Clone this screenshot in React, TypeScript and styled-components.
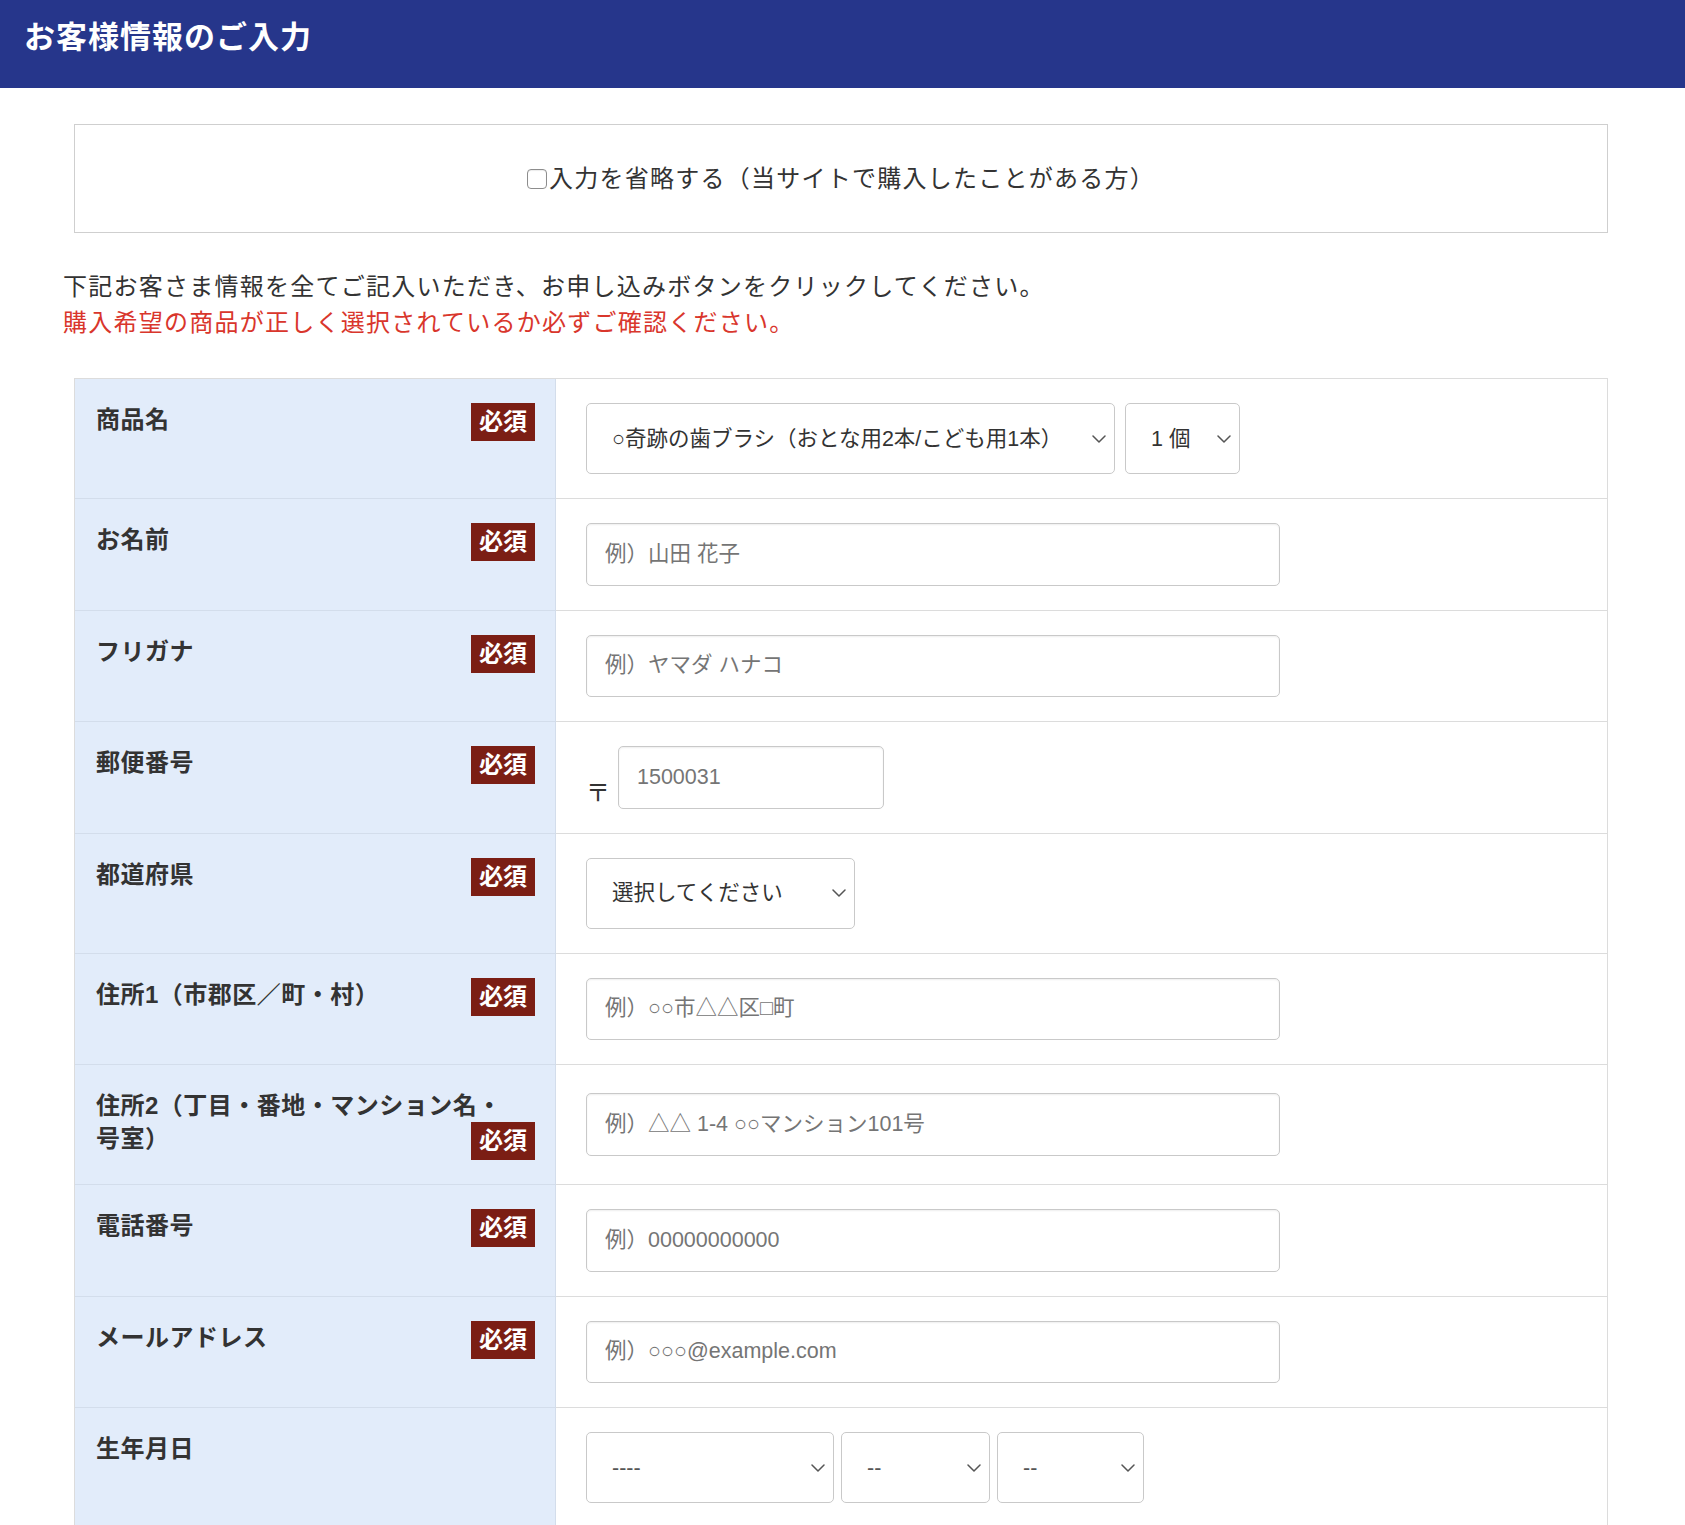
import React from 'react';
import styled, { createGlobalStyle } from 'styled-components';

const GlobalStyle = createGlobalStyle`
  html, body { margin: 0; padding: 0; background: #fff; }
  body {
    font-family: "Liberation Sans", "Noto Sans CJK JP", sans-serif;
    color: #333;
  }
  *, *::before, *::after { box-sizing: border-box; }
`;

const Header = styled.header`
  height: 88px;
  background: #26368b;
  padding: 16px 24px 0;
`;

const Title = styled.h1`
  margin: 0;
  font-size: 31px;
  line-height: 44px;
  font-weight: 700;
  letter-spacing: 1px;
  color: #fff;
`;

const Main = styled.main`
  padding: 36px 0 60px 63px;
`;

const SkipBox = styled.label`
  display: flex;
  align-items: center;
  justify-content: center;
  width: 1534px;
  height: 109px;
  margin-left: 11px;
  border: 1px solid #cfcfcf;
  font-size: 24px;
  line-height: 36px;
  letter-spacing: 1.25px;
  color: #333;
  cursor: pointer;
`;

const Check = styled.input.attrs({ type: 'checkbox' })`
  appearance: none;
  width: 20px;
  height: 20px;
  margin: 0 2px 0 0;
  border: 1.5px solid #8d8d8d;
  border-radius: 4px;
  background: #fff;
  box-shadow: inset 0 1px 1px rgba(0, 0, 0, 0.08);
`;

const Intro = styled.div`
  margin: 36px 0 37px;
  font-size: 24px;
  line-height: 36px;
  letter-spacing: 1.25px;
`;

const Line = styled.p<{ $alert?: boolean }>`
  margin: 0;
  color: ${(p) => (p.$alert ? '#d9362c' : '#333')};
`;

const Table = styled.div`
  width: 1534px;
  margin-left: 11px;
  border: 1px solid #dcdcdc;
  border-bottom: none;
`;

const Row = styled.div`
  display: grid;
  grid-template-columns: 481px 1fr;
`;

const LabelCell = styled.div`
  display: flow-root;
  background: #e2ecfa;
  border-right: 1px solid #d3ddeb;
  border-bottom: 1px solid #d3ddeb;
  padding: 24px 20px 24px 21px;
  font-size: 24px;
  font-weight: 700;
  line-height: 33px;
  letter-spacing: 0.5px;
  color: #333;
`;

const KeepTogether = styled.span`
  display: inline-block;
`;

const Badge = styled.span`
  float: right;
  height: 38px;
  line-height: 38px;
  margin-left: 8px;
  padding: 0 8px;
  background: #7b1e14;
  color: #fff;
  font-size: 24px;
  font-weight: 700;
  letter-spacing: 0;
`;

const ValueCell = styled.div`
  display: flex;
  align-items: center;
  padding: 24px 30px;
  border-bottom: 1px solid #dcdcdc;
`;

const Group = styled.div<{ $gap: number }>`
  display: flex;
  align-items: center;
  gap: ${(p) => p.$gap}px;
`;

const SelectWrap = styled.div<{ $w: number }>`
  position: relative;
  width: ${(p) => p.$w}px;
`;

const Select = styled.select<{ $muted?: boolean }>`
  appearance: none;
  display: block;
  width: 100%;
  height: 71px;
  margin: 0;
  padding: 0 40px 0 25px;
  border: 1px solid #c9c9c9;
  border-radius: 5px;
  background: #fff;
  font-family: "Liberation Sans", "Noto Sans CJK JP", sans-serif;
  font-size: 21.5px;
  color: ${(p) => (p.$muted ? '#555' : '#333')};
  outline: none;
`;

const Chevron = styled.svg`
  position: absolute;
  right: 9px;
  top: 50%;
  width: 14px;
  height: 8px;
  transform: translateY(-50%);
  pointer-events: none;
`;

const TextInput = styled.input<{ $w: string }>`
  display: block;
  width: ${(p) => p.$w};
  height: 62.5px;
  margin: 0;
  padding: 0 18px;
  border: 1px solid #c9c9c9;
  border-radius: 5px;
  background: #fff;
  box-shadow: inset 0 1px 2px rgba(0, 0, 0, 0.07);
  font-family: "Liberation Sans", "Noto Sans CJK JP", sans-serif;
  font-size: 21.5px;
  color: #333;
  outline: none;
  &::placeholder { color: #757575; opacity: 1; }
`;

const ZipGroup = styled.div`
  display: flex;
  align-items: flex-end;
`;

const ZipMark = styled.span`
  font-size: 24px;
  line-height: 24px;
  margin: 0 8px 4px 0;
  color: #333;
`;

type Opt = { w: number; value: string; muted?: boolean };

const Dropdown: React.FC<Opt> = ({ w, value, muted }) => (
  <SelectWrap $w={w}>
    <Select $muted={muted} defaultValue={value}>
      <option value={value}>{value}</option>
    </Select>
    <Chevron viewBox="0 0 14 8" fill="none">
      <polyline points="1,1 7,7 13,1" stroke="#555" strokeWidth="1.5" strokeLinecap="round" strokeLinejoin="round" />
    </Chevron>
  </SelectWrap>
);

type Field = {
  label: React.ReactNode;
  required: boolean;
  control: React.ReactNode;
};

const fields: Field[] = [
  {
    label: '商品名',
    required: true,
    control: (
      <Group $gap={10}>
        <Dropdown w={529} value="○奇跡の歯ブラシ（おとな用2本/こども用1本）" />
        <Dropdown w={115} value="1 個" />
      </Group>
    ),
  },
  { label: 'お名前', required: true, control: <TextInput $w="70%" placeholder="例）山田 花子" /> },
  { label: 'フリガナ', required: true, control: <TextInput $w="70%" placeholder="例）ヤマダ ハナコ" /> },
  {
    label: '郵便番号',
    required: true,
    control: (
      <ZipGroup>
        <ZipMark>〒</ZipMark>
        <TextInput $w="266px" placeholder="1500031" />
      </ZipGroup>
    ),
  },
  { label: '都道府県', required: true, control: <Dropdown w={269} value="選択してください" /> },
  { label: '住所1（市郡区／町・村）', required: true, control: <TextInput $w="70%" placeholder="例）○○市△△区□町" /> },
  {
    label: (
      <>
        住所2（丁目・番地・マンション名・<KeepTogether>号室）</KeepTogether>
      </>
    ),
    required: true,
    control: <TextInput $w="70%" placeholder="例）△△ 1-4 ○○マンション101号" />,
  },
  { label: '電話番号', required: true, control: <TextInput $w="70%" placeholder="例）00000000000" /> },
  { label: 'メールアドレス', required: true, control: <TextInput $w="70%" placeholder="例）○○○@example.com" /> },
  {
    label: '生年月日',
    required: false,
    control: (
      <Group $gap={7}>
        <Dropdown w={248} value="----" muted />
        <Dropdown w={149} value="--" muted />
        <Dropdown w={147} value="--" muted />
      </Group>
    ),
  },
];

export default function App() {
  return (
    <>
      <GlobalStyle />
      <Header>
        <Title>お客様情報のご入力</Title>
      </Header>
      <Main>
        <SkipBox>
          <Check />
          入力を省略する（当サイトで購入したことがある方）
        </SkipBox>
        <Intro>
          <Line>下記お客さま情報を全てご記入いただき、お申し込みボタンをクリックしてください。</Line>
          <Line $alert>購入希望の商品が正しく選択されているか必ずご確認ください。</Line>
        </Intro>
        <Table>
          {fields.map((f, i) => (
            <Row key={i}>
              <LabelCell>
                {f.label}
                {f.required && <Badge>必須</Badge>}
              </LabelCell>
              <ValueCell>{f.control}</ValueCell>
            </Row>
          ))}
        </Table>
      </Main>
    </>
  );
}
